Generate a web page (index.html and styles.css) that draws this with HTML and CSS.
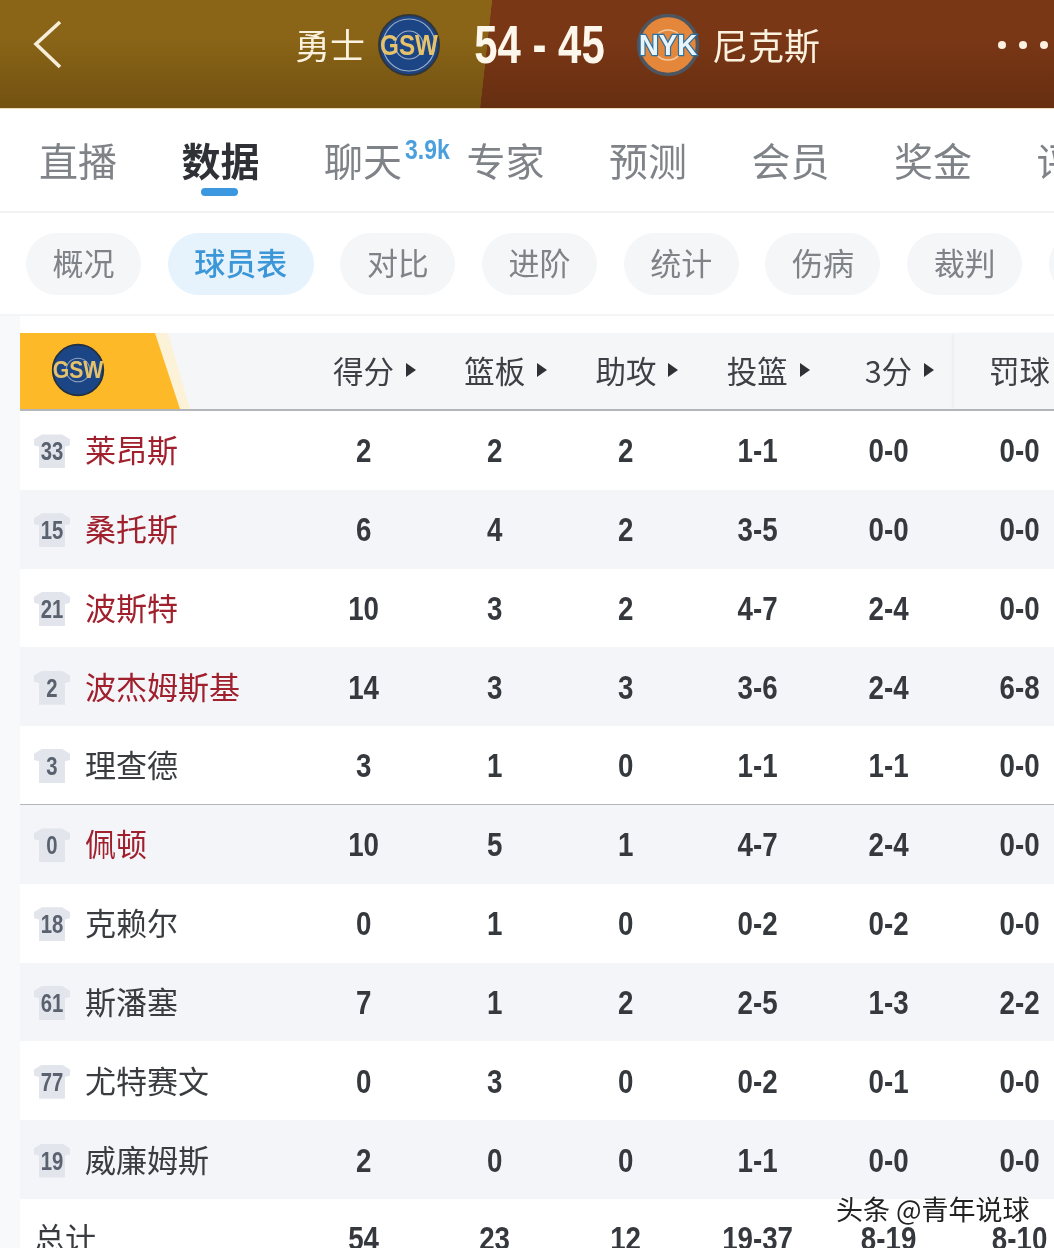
FILE: index.html
```html
<!DOCTYPE html>
<html lang="zh-CN">
<head>
<meta charset="utf-8">
<title>勇士 54 - 45 尼克斯</title>
<link rel="stylesheet" href="styles.css">
</head>
<body>
<div class="page">
  <header class="top">
    <svg class="back" viewBox="0 0 30 50" width="30" height="50"><path d="M27 2 L3 24 L27 47" fill="none" stroke="#f7eeda" stroke-width="3.6"/></svg>
    <span class="team team-home">勇士</span>
    <svg class="logo logo-home" viewBox="0 0 64 64" width="64" height="64">
      <circle cx="32" cy="32" r="30" fill="#1c4586" stroke="#32363a" stroke-width="2"/>
      <circle cx="32" cy="32" r="26" fill="none" stroke="#9fb0c4" stroke-width="1.2"/>
      <circle cx="32" cy="32" r="14" fill="none" stroke="#9fb0c4" stroke-width="1.2"/>
      <text x="32" y="42" class="logo-text gsw" textLength="58" lengthAdjust="spacingAndGlyphs">GSW</text>
    </svg>
    <span class="score">54 - 45</span>
    <svg class="logo logo-away" viewBox="0 0 64 64" width="64" height="64">
      <circle cx="32" cy="32" r="29.5" fill="#e4873a" stroke="#4d5660" stroke-width="3.5"/>
      <circle cx="32" cy="32" r="15" fill="none" stroke="#f2c9a0" stroke-width="1.5"/>
      <text x="32" y="42" class="logo-text nyk" textLength="58" lengthAdjust="spacingAndGlyphs">NYK</text>
    </svg>
    <span class="team team-away">尼克斯</span>
    <div class="dots"><i></i><i></i><i></i></div>
  </header>

  <nav class="tabs">
    <span class="tab">直播</span>
    <span class="tab tab-active">数据</span>
    <span class="tab">聊天<sup class="count">3.9k</sup></span>
    <span class="tab">专家</span>
    <span class="tab">预测</span>
    <span class="tab">会员</span>
    <span class="tab">奖金</span>
    <span class="tab">评论</span>
  </nav>

  <div class="pills">
    <span class="pill">概况</span>
    <span class="pill pill-active">球员表</span>
    <span class="pill">对比</span>
    <span class="pill">进阶</span>
    <span class="pill">统计</span>
    <span class="pill">伤病</span>
    <span class="pill">裁判</span>
    <span class="pill">更多</span>
  </div>

  <main class="board">
    <div class="row head">
      <div class="banner">
        <svg class="banner-logo" viewBox="0 0 64 64" width="54" height="54">
          <circle cx="32" cy="32" r="30" fill="#1c4586" stroke="#22303f" stroke-width="2"/>
          <circle cx="32" cy="32" r="14" fill="none" stroke="#8fa2ba" stroke-width="1.2"/>
          <text x="32" y="42" class="logo-text gsw" textLength="60" lengthAdjust="spacingAndGlyphs">GSW</text>
        </svg>
      </div>
      <div class="h"><span class="sort">得分</span></div>
      <div class="h"><span class="sort">篮板</span></div>
      <div class="h"><span class="sort">助攻</span></div>
      <div class="h"><span class="sort">投篮</span></div>
      <div class="h"><span class="sort">3分</span></div>
      <div class="h h-last"><span>罚球</span></div>
    </div>

    <div class="row"><div class="player"><span class="jersey"><i>33</i></span><span class="name starter">莱昂斯</span></div><b>2</b><b>2</b><b>2</b><b>1-1</b><b>0-0</b><b>0-0</b></div>
    <div class="row alt"><div class="player"><span class="jersey"><i>15</i></span><span class="name starter">桑托斯</span></div><b>6</b><b>4</b><b>2</b><b>3-5</b><b>0-0</b><b>0-0</b></div>
    <div class="row"><div class="player"><span class="jersey"><i>21</i></span><span class="name starter">波斯特</span></div><b>10</b><b>3</b><b>2</b><b>4-7</b><b>2-4</b><b>0-0</b></div>
    <div class="row alt"><div class="player"><span class="jersey"><i>2</i></span><span class="name starter">波杰姆斯基</span></div><b>14</b><b>3</b><b>3</b><b>3-6</b><b>2-4</b><b>6-8</b></div>
    <div class="row sep"><div class="player"><span class="jersey"><i>3</i></span><span class="name">理查德</span></div><b>3</b><b>1</b><b>0</b><b>1-1</b><b>1-1</b><b>0-0</b></div>
    <div class="row alt"><div class="player"><span class="jersey"><i>0</i></span><span class="name starter">佩顿</span></div><b>10</b><b>5</b><b>1</b><b>4-7</b><b>2-4</b><b>0-0</b></div>
    <div class="row"><div class="player"><span class="jersey"><i>18</i></span><span class="name">克赖尔</span></div><b>0</b><b>1</b><b>0</b><b>0-2</b><b>0-2</b><b>0-0</b></div>
    <div class="row alt"><div class="player"><span class="jersey"><i>61</i></span><span class="name">斯潘塞</span></div><b>7</b><b>1</b><b>2</b><b>2-5</b><b>1-3</b><b>2-2</b></div>
    <div class="row"><div class="player"><span class="jersey"><i>77</i></span><span class="name">尤特赛文</span></div><b>0</b><b>3</b><b>0</b><b>0-2</b><b>0-1</b><b>0-0</b></div>
    <div class="row alt"><div class="player"><span class="jersey"><i>19</i></span><span class="name">威廉姆斯</span></div><b>2</b><b>0</b><b>0</b><b>1-1</b><b>0-0</b><b>0-0</b></div>
    <div class="row"><div class="player"><span class="name">总计</span></div><b>54</b><b>23</b><b>12</b><b>19-37</b><b>8-19</b><b>8-10</b></div>
  </main>

  <div class="mark">头条 @青年说球</div>
</div>
</body>
</html>
```

FILE: styles.css
```css
* { box-sizing: border-box; }
html, body { margin: 0; padding: 0; }
body {
  background: #fff;
  font-family: "Noto Sans CJK SC", "Noto Sans", sans-serif;
  color: #33363b;
}
.page {
  position: relative;
  width: 1054px;
  height: 1248px;
  overflow: hidden;
  background: #f8f9fb;
  filter: blur(.4px);
}

/* top bar */
.top {
  position: relative;
  height: 109px;
  border-bottom: 1px solid #f0dcc0;
  display: flex;
  align-items: center;
  padding: 0 0 18px 33px;
  color: #fbf1df;
  background:
    linear-gradient(180deg, rgba(0,0,0,0) 35%, rgba(40,20,0,.24) 100%),
    linear-gradient(96.3deg, #8a6517 46.15%, #7a3716 46.2%);
}
.back { flex: none; margin-right: 232px; }
.team { padding-bottom: 3px; line-height: 44px; white-space: nowrap; }
.team-home { font-size: 35px; }
.team-away { font-size: 36px; margin-left: 12px; }
.logo { flex: none; }
.logo-home { margin-left: 12px; }
.logo-away { margin-left: 29px; }
.score {
  margin: 0 -15px 0 16px;
  font-family: "Liberation Sans", sans-serif;
  font-weight: 700;
  font-size: 53px;
  line-height: 60px;
  color: #fdf6ea;
  white-space: nowrap;
  transform: scaleX(.79);
}
.logo-text {
  font-family: "Liberation Sans", sans-serif;
  font-weight: 700;
  font-size: 29px;
  text-anchor: middle;
}
.gsw { fill: #e6c36a; }
.nyk { fill: #e9f4fa; stroke: #2e6f9e; stroke-width: 2.5px; paint-order: stroke; }
.dots {
  position: absolute;
  left: 998px;
  top: 41px;
  display: flex;
  gap: 13px;
}
.dots i {
  display: block;
  width: 8px;
  height: 8px;
  border-radius: 50%;
  background: #fdf1e2;
}

/* tabs */
.tabs {
  height: 104px;
  background: #fff;
  border-bottom: 2px solid #f1f2f4;
  display: flex;
  gap: 65.5px;
  padding: 30px 0 0 39px;
  white-space: nowrap;
}
.tab {
  position: relative;
  flex: none;
  width: 77px;
  font-size: 39px;
  line-height: 40px;
  color: #7f8388;
}
.tab-active { color: #2f3136; font-weight: 700; }
.tab-active::after {
  content: "";
  position: absolute;
  left: 19px;
  top: 49px;
  width: 37px;
  height: 8px;
  border-radius: 4px;
  background: #3a97e0;
}
.count {
  position: absolute;
  left: 81px;
  top: -4px;
  font-family: "Liberation Sans", sans-serif;
  font-weight: 700;
  font-size: 27px;
  line-height: 30px;
  color: #4a9fdc;
  transform: scaleX(.85);
  transform-origin: left center;
}

/* pills */
.pills {
  height: 103px;
  background: #fff;
  border-bottom: 2px solid #f4f5f7;
  display: flex;
  gap: 26.7px;
  padding: 20px 0 0 26px;
  white-space: nowrap;
}
.pill {
  flex: none;
  height: 62px;
  padding: 0 26.5px;
  border-radius: 31px;
  background: #f5f6f8;
  font-size: 31px;
  line-height: 58px;
  color: #7f8388;
}
.pill-active {
  background: #e6f3fc;
  color: #3b97d8;
  font-weight: 500;
}

/* table */
.board {
  margin-left: 20px;
  width: 1064px;
  padding-top: 17px;
  background: #fff;
}
.row {
  display: grid;
  grid-template-columns: 278px repeat(6, 131.2px);
  height: 78.8px;
  align-items: center;
  background: #fff;
}
.row.alt { background: #f4f5f9; }
.row b {
  padding-top: 2px;
  text-align: center;
  font-family: "Liberation Sans", sans-serif;
  font-weight: 700;
  font-size: 33px;
  line-height: 40px;
  color: #35383d;
  transform: scaleX(.84);
}
.row.sep { border-bottom: 1px solid #b4b6ba; }
.row.head {
  height: 78px;
  background: #f5f6f8;
  border-bottom: 2px solid #b4b6ba;
  align-items: stretch;
}
.banner {
  position: relative;
  display: flex;
  align-items: center;
  padding: 0 0 2px 31px;
}
.banner::before {
  content: "";
  position: absolute;
  left: 0;
  top: 0;
  width: 170px;
  height: 76px;
  background: #fbf2d8;
  clip-path: polygon(0 0, 148px 0, 170px 76px, 0 76px);
}
.banner::after {
  content: "";
  position: absolute;
  left: 0;
  top: 0;
  width: 160px;
  height: 76px;
  background: #fdb927;
  clip-path: polygon(0 0, 135px 0, 160px 76px, 0 76px);
}
.banner-logo { position: relative; z-index: 1; flex: none; }
.h {
  display: flex;
  align-items: center;
  justify-content: center;
  font-size: 30.5px;
  color: #3d4045;
  padding-bottom: 2px;
}
.h-last { box-shadow: -2px 0 2px rgba(0,0,0,.03); }
.sort { position: relative; line-height: 40px; }
.sort::after {
  content: "";
  position: absolute;
  left: calc(100% + 12px);
  top: 13px;
  border-left: 10px solid #2f3136;
  border-top: 7.5px solid transparent;
  border-bottom: 7.5px solid transparent;
}
.player {
  display: flex;
  align-items: center;
  padding: 2px 0 0 14px;
  gap: 15px;
}
.jersey {
  flex: none;
  width: 36px;
  height: 34px;
  background: #e2e5ec;
  clip-path: polygon(22% 0, 78% 0, 100% 14%, 100% 32%, 86% 36%, 86% 100%, 14% 100%, 14% 36%, 0 32%, 0 14%);
  font-family: "Liberation Sans", sans-serif;
  font-weight: 700;
  font-size: 26px;
  line-height: 34px;
  text-align: center;
  color: #5a6270;
}
.jersey i {
  display: block;
  font-style: normal;
  transform: scaleX(.78);
}
.name {
  padding-bottom: 4px;
  font-size: 31px;
  line-height: 40px;
  color: #3a3c40;
  white-space: nowrap;
}
.starter { color: #a0212d; }

/* watermark */
.mark {
  position: absolute;
  left: 836px;
  top: 1192px;
  font-size: 27px;
  line-height: 34px;
  color: #222;
  white-space: nowrap;
  text-shadow: 0 0 2px #fff, 0 0 2px #fff, 1px 1px 1px #fff;
}
```
